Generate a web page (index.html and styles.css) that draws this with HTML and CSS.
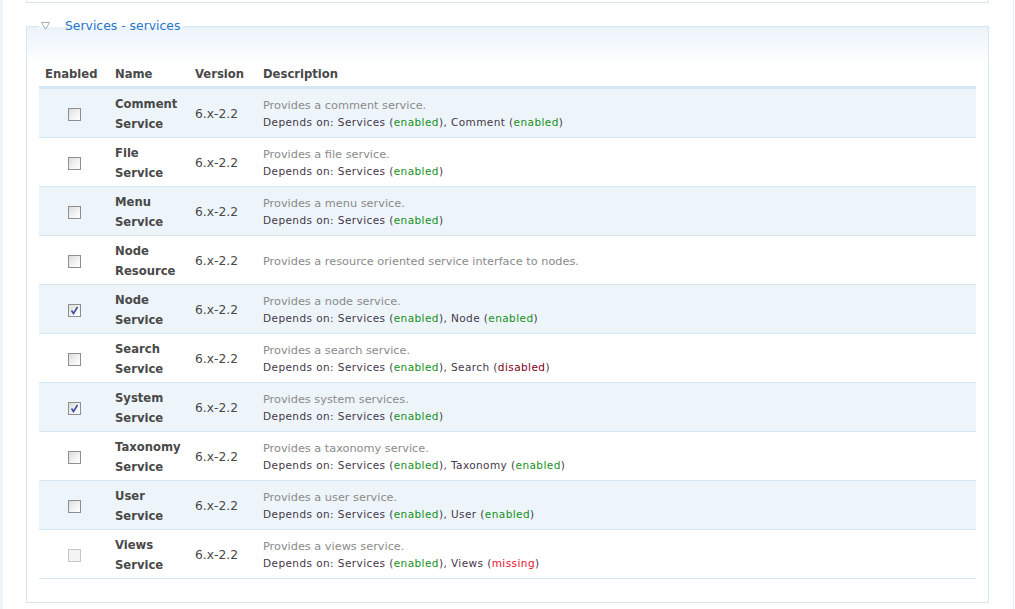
FILE: index.html
```html
<!DOCTYPE html>
<html>
<head>
<meta charset="utf-8">
<link rel="stylesheet" href="styles.css">
</head>
<body>
<div class="page">
  <div class="prev-fieldset"></div>
  <fieldset class="group">
    <legend class="group-legend">
      <svg class="toggle" width="9" height="8" viewBox="0 0 9 8"><path d="M0.5 0.5 H8.5 L4.5 7.5 Z" fill="none" stroke="#a8acb0" stroke-width="1"/></svg>
      <span class="legend-text">Services - services</span>
    </legend>
    <table class="modules">
      <thead>
        <tr>
          <th class="c-en">Enabled</th>
          <th class="c-name">Name</th>
          <th class="c-ver">Version</th>
          <th class="c-desc">Description</th>
        </tr>
      </thead>
      <tbody>
        <tr class="odd">
          <td class="c-en"><span class="cb"></span></td>
          <td class="c-name">Comment<br>Service</td>
          <td class="c-ver">6.x-2.2</td>
          <td class="c-desc"><div class="desc">Provides a comment service.</div><div class="deps">Depends on: Services (<span class="en">enabled</span>), Comment (<span class="en">enabled</span>)</div></td>
        </tr>
        <tr class="even">
          <td class="c-en"><span class="cb"></span></td>
          <td class="c-name">File<br>Service</td>
          <td class="c-ver">6.x-2.2</td>
          <td class="c-desc"><div class="desc">Provides a file service.</div><div class="deps">Depends on: Services (<span class="en">enabled</span>)</div></td>
        </tr>
        <tr class="odd">
          <td class="c-en"><span class="cb"></span></td>
          <td class="c-name">Menu<br>Service</td>
          <td class="c-ver">6.x-2.2</td>
          <td class="c-desc"><div class="desc">Provides a menu service.</div><div class="deps">Depends on: Services (<span class="en">enabled</span>)</div></td>
        </tr>
        <tr class="even">
          <td class="c-en"><span class="cb"></span></td>
          <td class="c-name">Node<br>Resource</td>
          <td class="c-ver">6.x-2.2</td>
          <td class="c-desc"><div class="desc">Provides a resource oriented service interface to nodes.</div></td>
        </tr>
        <tr class="odd">
          <td class="c-en"><span class="cb checked"><svg width="11" height="11" viewBox="0 0 11 11"><path d="M2.5 5.5 L4.5 8.5 L8.5 2" fill="none" stroke="#3a4f9e" stroke-width="1.6"/></svg></span></td>
          <td class="c-name">Node<br>Service</td>
          <td class="c-ver">6.x-2.2</td>
          <td class="c-desc"><div class="desc">Provides a node service.</div><div class="deps">Depends on: Services (<span class="en">enabled</span>), Node (<span class="en">enabled</span>)</div></td>
        </tr>
        <tr class="even">
          <td class="c-en"><span class="cb"></span></td>
          <td class="c-name">Search<br>Service</td>
          <td class="c-ver">6.x-2.2</td>
          <td class="c-desc"><div class="desc">Provides a search service.</div><div class="deps">Depends on: Services (<span class="en">enabled</span>), Search (<span class="dis">disabled</span>)</div></td>
        </tr>
        <tr class="odd">
          <td class="c-en"><span class="cb checked"><svg width="11" height="11" viewBox="0 0 11 11"><path d="M2.5 5.5 L4.5 8.5 L8.5 2" fill="none" stroke="#3a4f9e" stroke-width="1.6"/></svg></span></td>
          <td class="c-name">System<br>Service</td>
          <td class="c-ver">6.x-2.2</td>
          <td class="c-desc"><div class="desc">Provides system services.</div><div class="deps">Depends on: Services (<span class="en">enabled</span>)</div></td>
        </tr>
        <tr class="even">
          <td class="c-en"><span class="cb"></span></td>
          <td class="c-name">Taxonomy<br>Service</td>
          <td class="c-ver">6.x-2.2</td>
          <td class="c-desc"><div class="desc">Provides a taxonomy service.</div><div class="deps">Depends on: Services (<span class="en">enabled</span>), Taxonomy (<span class="en">enabled</span>)</div></td>
        </tr>
        <tr class="odd">
          <td class="c-en"><span class="cb"></span></td>
          <td class="c-name">User<br>Service</td>
          <td class="c-ver">6.x-2.2</td>
          <td class="c-desc"><div class="desc">Provides a user service.</div><div class="deps">Depends on: Services (<span class="en">enabled</span>), User (<span class="en">enabled</span>)</div></td>
        </tr>
        <tr class="even">
          <td class="c-en"><span class="cb disabled"></span></td>
          <td class="c-name">Views<br>Service</td>
          <td class="c-ver">6.x-2.2</td>
          <td class="c-desc"><div class="desc">Provides a views service.</div><div class="deps">Depends on: Services (<span class="en">enabled</span>), Views (<span class="miss">missing</span>)</div></td>
        </tr>
      </tbody>
    </table>
  </fieldset>
</div>
</body>
</html>
```

FILE: styles.css
```css
html, body {
  margin: 0;
  padding: 0;
  background: #fff;
}
body {
  font-family: "DejaVu Sans", Verdana, sans-serif;
  color: #494949;
}
.page {
  width: 1010px;
  min-height: 609px;
  border-left: 3px solid #eef4fa;
  border-right: 1px solid #e3edf6;
  box-sizing: content-box;
}
.prev-fieldset {
  margin: 0 24px 0 23px;
  border: 1px solid #d6e6f2;
  border-top: 0;
  box-sizing: border-box;
  height: 3px;
}
.group {
  margin: 15px 24px 0 23px;
  padding: 0 12px 23px 12px;
  border: 1px solid #d6e6f2;
  background: linear-gradient(to bottom, #ebf3fa 0, #ffffff 38px);
  min-inline-size: 0;
}
.group-legend {
  padding: 0 3px 0 2px;
  line-height: 16px;
  font-size: 12.4px;
  display: flex;
  align-items: center;
}
.toggle {
  display: block;
  margin-right: 15px;
}
.legend-text {
  color: #1f75c9;
}
.modules {
  width: 937px;
  border-collapse: collapse;
  margin-top: 28px;
  table-layout: fixed;
}
.modules th {
  text-align: left;
  font-size: 11.6px;
  font-weight: bold;
  line-height: 16px;
  padding: 4px 6px 4px 6px;
  border-bottom: 3px solid #d3e7f4;
  color: #494949;
}
.modules td {
  padding: 5px 6px 3px 6px;
  vertical-align: middle;
  border-bottom: 1px solid #d3e7f4;
}
.modules tr.odd td {
  background: #edf5fa;
}
.modules tr.even td {
  background: #fff;
}
.modules th.c-en { width: 58px; }
.modules th.c-name { width: 68px; }
.modules th.c-ver { width: 56px; }
td.c-en {
  text-align: center;
}
.modules td.c-en {
  padding: 4px 0;
}
td.c-name {
  font-weight: bold;
  font-size: 11.6px;
  line-height: 20px;
  color: #494949;
}
td.c-ver {
  font-size: 12.3px;
  line-height: 20px;
}
.desc {
  font-size: 11.3px;
  line-height: 17px;
  color: #8a8a8a;
}
.deps {
  font-size: 10.5px;
  letter-spacing: 0.42px;
  line-height: 17px;
  color: #44384a;
}
.en { color: #16901a; }
.dis { color: #800022; }
.miss { color: #f0102a; }
.cb {
  display: inline-block;
  width: 13px;
  height: 13px;
  box-sizing: border-box;
  border: 1px solid #8e8f8f;
  background: linear-gradient(135deg, #dcdcdc 0, #f4f4f4 60%, #ffffff 100%);
  vertical-align: middle;
}
.cb svg {
  display: block;
  margin: 0;
}
.cb.disabled {
  border-color: #c5c5c5;
  background: #f4f4f4;
}
```
